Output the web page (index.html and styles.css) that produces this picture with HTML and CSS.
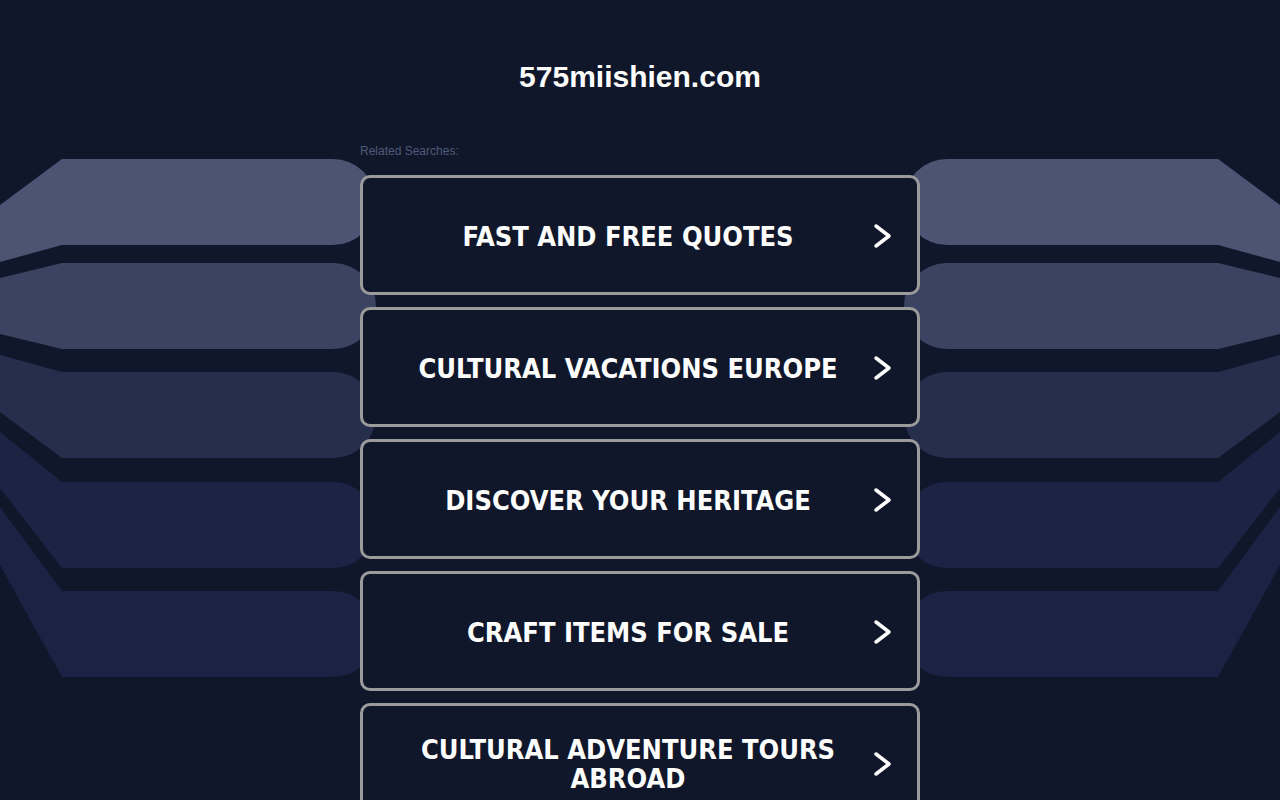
FILE: index.html
```html
<!DOCTYPE html>
<html lang="en">
<head>
  <meta charset="UTF-8" />
  <meta name="viewport" content="width=device-width, initial-scale=1" />
  <title>575miishien.com</title>
  <link rel="stylesheet" href="styles.css">
</head>
<body>

  <!-- decorative ribbons behind the list -->
  <div class="backdrop" aria-hidden="true">
    <svg class="ribbons" width="1280" height="800" viewBox="0 0 1280 800">
      <g id="ribbonsLeft">
        <path fill="#4b5573" d="M0 205 L62 159 L333 159 A43 43 0 0 1 333 245 L62 245 L0 262 Z"/>
        <path fill="#3a4361" d="M0 278 L62 263 L333 263 A43 43 0 0 1 333 349 L62 349 L0 334 Z"/>
        <path fill="#262e4d" d="M0 355 L62 372 L333 372 A43 43 0 0 1 333 458 L62 458 L0 412 Z"/>
        <path fill="#1c2445" d="M0 432 L62 482 L333 482 A43 43 0 0 1 333 568 L62 568 L0 488 Z"/>
        <path fill="#1b2345" d="M0 507 L62 591 L333 591 A43 43 0 0 1 333 677 L62 677 L0 565 Z"/>
      </g>
      <use href="#ribbonsLeft" transform="translate(1280 0) scale(-1 1)"/>
    </svg>
  </div>

  <div class="page">
    <h1 class="domain">575miishien.com</h1>

    <div class="related">
      <p class="related-label">Related Searches:</p>
      <ul class="links">
        <li>
          <a class="link-btn" href="#">
            <span class="link-text">FAST AND FREE QUOTES</span>
            <svg class="chevron" viewBox="0 0 24 28"><path d="M7 4 L20 14 L7 24"/></svg>
          </a>
        </li>
        <li>
          <a class="link-btn" href="#">
            <span class="link-text">CULTURAL VACATIONS EUROPE</span>
            <svg class="chevron" viewBox="0 0 24 28"><path d="M7 4 L20 14 L7 24"/></svg>
          </a>
        </li>
        <li>
          <a class="link-btn" href="#">
            <span class="link-text">DISCOVER YOUR HERITAGE</span>
            <svg class="chevron" viewBox="0 0 24 28"><path d="M7 4 L20 14 L7 24"/></svg>
          </a>
        </li>
        <li>
          <a class="link-btn" href="#">
            <span class="link-text">CRAFT ITEMS FOR SALE</span>
            <svg class="chevron" viewBox="0 0 24 28"><path d="M7 4 L20 14 L7 24"/></svg>
          </a>
        </li>
        <li>
          <a class="link-btn" href="#">
            <span class="link-text">CULTURAL ADVENTURE TOURS ABROAD</span>
            <svg class="chevron" viewBox="0 0 24 28"><path d="M7 4 L20 14 L7 24"/></svg>
          </a>
        </li>
      </ul>
    </div>
  </div>

</body>
</html>
```

FILE: styles.css
```css
body {
  font-family: "Liberation Sans", Arial, sans-serif;
  background: #11172b;
  margin: 0;
  padding: 0;
}

.backdrop {
  position: absolute;
  top: 0;
  left: 0;
  width: 1280px;
  height: 800px;
  z-index: 0;
}

.ribbons {
  display: block;
}

.page {
  position: relative;
  z-index: 1;
}

.domain {
  margin: 0;
  padding-top: 59px;
  font-size: 30px;
  line-height: 36px;
  font-weight: bold;
  text-align: center;
  color: #fff;
}

.related {
  width: 560px;
  margin: 49px auto 0;
}

.related-label {
  margin: 0 0 17px;
  font-size: 12px;
  line-height: 14px;
  color: #4f5978;
}

.links {
  list-style: none;
  margin: 0;
  padding: 0;
  display: flex;
  flex-direction: column;
  gap: 12px;
}

.link-btn {
  display: flex;
  align-items: center;
  min-height: 112px;
  padding: 2px 24px 0;
  background: #11172b;
  border: 3px solid #9b9b9b;
  border-radius: 10px;
  color: #fff;
  text-decoration: none;
}

.link-text {
  flex: 1;
  text-align: center;
  font-family: "DejaVu Sans Condensed", "DejaVu Sans", sans-serif;
  font-weight: bold;
  font-size: 27px;
  line-height: 29px;
}

.chevron {
  width: 24px;
  height: 28px;
  flex-shrink: 0;
  fill: none;
  stroke: #fff;
  stroke-width: 3.5;
  stroke-linecap: round;
  stroke-linejoin: round;
}
```
